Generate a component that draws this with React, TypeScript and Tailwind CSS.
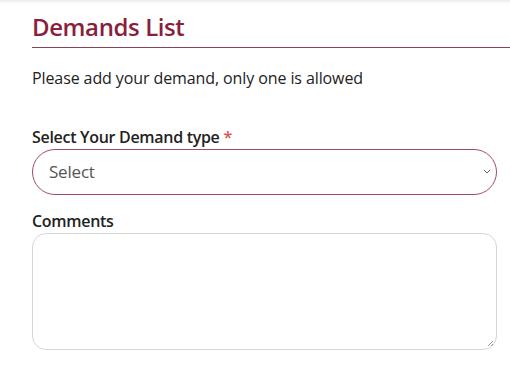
import React from "react";

export default function App() {
  return (
    <div className="w-[510px] h-[365px] bg-white overflow-hidden" style={{ fontFamily: '"Open Sans", "Noto Sans", sans-serif' }}>
      <div className="h-[4px] bg-gradient-to-b from-[#ececec] to-white" />
      <div className="pl-[32px]">
        <h1 className="text-[24px] leading-[34px] font-semibold text-[#8a1f3d] mt-[6px] tracking-[-0.4px]">Demands List</h1>
        <div className="h-px bg-[#8a4455] mt-[3px]" />
        <p className="text-[16px] leading-[22px] text-[#222] mt-[19px] tracking-[-0.1px]">Please add your demand, only one is allowed</p>
      </div>
      <div className="pl-[32px] pr-[13px] mt-[37px]">
        <label className="block text-[16px] leading-[22px] font-semibold text-[#222] tracking-[-0.3px]">
          Select Your Demand type <span className="text-[#d9534f]">*</span>
        </label>
        <div className="mt-[1px] h-[46px] rounded-full border border-[#a24a63] flex items-center justify-between pl-[16px] pr-[5px]">
          <span className="text-[17px] text-[#555] tracking-[-0.2px]">Select</span>
          <svg width="8" height="5" viewBox="0 0 8 5" className="mb-[2px]">
            <path d="M0.8 0.8l3.2 3.2 3.2-3.2" fill="none" stroke="#666" strokeWidth="1" />
          </svg>
        </div>
        <label className="block mt-[15px] text-[16px] leading-[22px] font-semibold text-[#222] tracking-[-0.3px]">Comments</label>
        <div className="relative mt-[1px] h-[117px] rounded-[14px] border border-[#d6d6d6]">
          <svg width="7" height="7" viewBox="0 0 7 7" className="absolute right-[2px] bottom-[2px]">
            <path d="M6 1L1 6M6 4L4 6" stroke="#999" strokeWidth="1" />
          </svg>
        </div>
      </div>
    </div>
  );
}
